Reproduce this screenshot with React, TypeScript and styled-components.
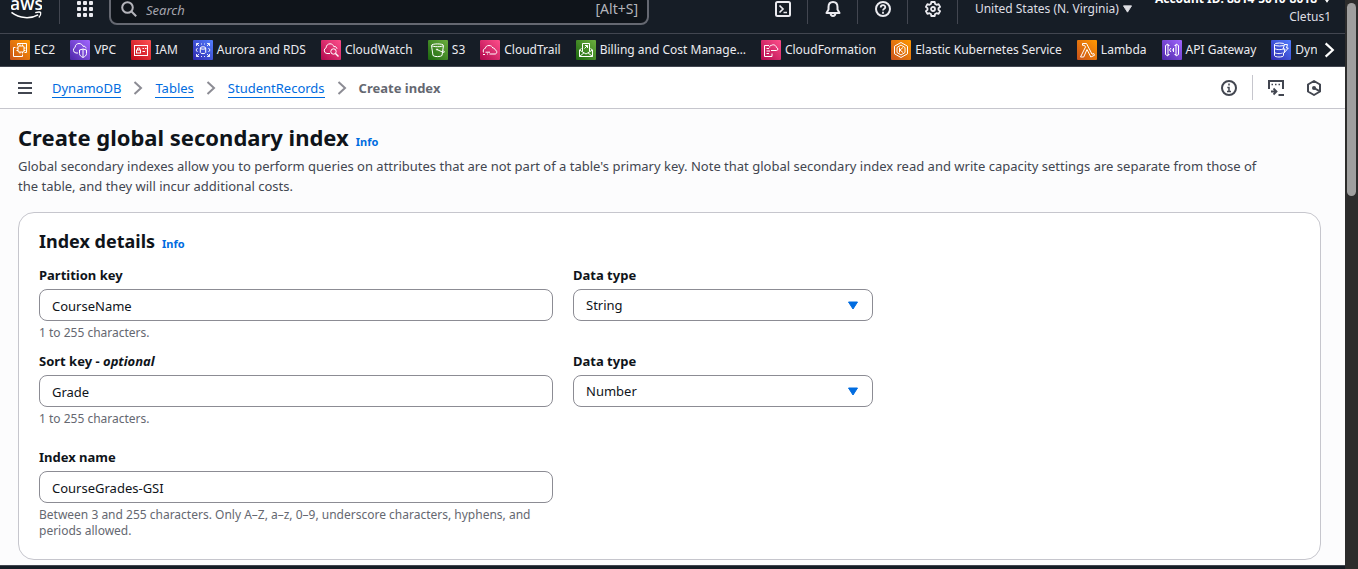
import React from "react";
import styled, { createGlobalStyle, css } from "styled-components";

const GlobalStyle = createGlobalStyle`
  * { box-sizing: border-box; }
  body {
    margin: 0;
    background: #fcfcfd;
    color: #0f141a;
    font-family: "Noto Sans", "Open Sans", sans-serif;
    font-size: 13px;
    line-height: 20px;
  }
  button, input, select { font: inherit; color: inherit; margin: 0; }
  button { padding: 0; border: 0; background: none; }
`;

/* ---------- window frame ---------- */

const Screen = styled.div`
  display: flex;
  height: 100vh;
  overflow: hidden;
`;

const Page = styled.div`
  flex: 1;
  min-width: 0;
  display: flex;
  flex-direction: column;
`;

const ScrollTrack = styled.div`
  flex: none;
  width: 13px;
  padding: 3px 2px;
  background: #2c2c2c;
`;

const ScrollThumb = styled.div`
  height: 34vh;
  border-radius: 5px;
  background: #9f9f9f;
`;

/* ---------- global navigation ---------- */

const TopBar = styled.header`
  display: flex;
  align-items: flex-end;
  height: 34px;
  overflow: hidden;
  background: #161d26;
  color: #dedee3;
  border-bottom: 1px solid #424650;
`;

const TopRow = styled.div`
  flex: 1;
  display: flex;
  align-items: center;
  height: 48px;
  padding: 0 14px 0 11px;
`;

const Logo = styled.a`
  display: flex;
  width: 31px;
  margin-right: 17px;
`;

const Cell = styled.button<{ $edge?: "left" | "right" }>`
  display: flex;
  align-items: center;
  justify-content: center;
  width: 50px;
  height: 30px;
  color: #ebebf0;
  ${(p) => p.$edge && css`border-${p.$edge}: 1px solid #424650;`}
  ${(p) => p.$edge === "right" && css`padding-left: 2px;`}
`;

const SearchBox = styled.label`
  display: flex;
  align-items: center;
  gap: 7px;
  flex: 0 1 540px;
  height: 32px;
  padding: 0 9px 0 10px;
  border: 2px solid #656871;
  border-radius: 8px;
  background: #0f141a;
  color: #b4b4bb;
  font-size: 14px;
`;

const SearchInput = styled.input`
  flex: 1;
  min-width: 0;
  padding: 2px 2px 0;
  border: 0;
  outline: 0;
  background: transparent;
  font-size: 13px;
  &::placeholder { color: #a4a4ad; font-style: italic; opacity: 1; }
`;

const Tools = styled.div`
  display: flex;
  align-items: center;
  margin-left: auto;
`;

const RegionButton = styled.button`
  display: flex;
  align-items: center;
  gap: 4px;
  margin: 0 23px 0 17px;
  font-size: 12px;
  white-space: nowrap;
`;

const AccountButton = styled.button`
  display: flex;
  flex-direction: column;
  align-items: flex-end;
  padding-bottom: 2px;
  font-size: 12px;
  line-height: 18px;
  white-space: nowrap;
`;

const AccountLine = styled.span`
  display: flex;
  align-items: center;
  gap: 6px;
  font-weight: 700;
  color: #fff;
`;

const Favorites = styled.nav`
  display: flex;
  align-items: center;
  height: 33px;
  padding-left: 10px;
  background: #161d26;
  border-bottom: 1px solid #424650;
`;

const FavoriteList = styled.div`
  flex: 1;
  min-width: 0;
  display: flex;
  gap: 15px;
  overflow: hidden;
`;

const Favorite = styled.a`
  flex: none;
  display: flex;
  align-items: center;
  gap: 4px;
  color: #ebebf0;
  font-size: 12px;
  text-decoration: none;
  white-space: nowrap;
`;

const ServiceTile = styled.span<{ $from: string; $to: string }>`
  display: flex;
  width: 20px;
  height: 20px;
  border-radius: 1px;
  background: linear-gradient(45deg, ${(p) => p.$from}, ${(p) => p.$to});
`;

const ScrollRight = styled.button`
  display: flex;
  justify-content: center;
  width: 28px;
  padding-right: 4px;
  color: #fff;
`;

/* ---------- breadcrumb bar ---------- */

const CrumbBar = styled.div`
  display: flex;
  align-items: center;
  height: 42px;
  padding: 0 23px 0 17px;
  background: #fff;
  border-bottom: 1px solid #c6c6cd;
  color: #424650;
`;

const IconButton = styled.button`
  display: flex;
  color: #424650;
`;

const Crumbs = styled.nav`
  display: flex;
  align-items: center;
  gap: 12px;
  margin-left: 19px;
  color: #8c8c94;
`;

const CrumbLink = styled.a`
  height: 20px;
  color: #006ce0;
  border-bottom: 1px solid #006ce0;
  text-decoration: none;
`;

const CurrentCrumb = styled.span`
  color: #656871;
  font-weight: 700;
`;

const PageTools = styled.div`
  display: flex;
  align-items: center;
  gap: 22px;
  margin-left: auto;
`;

const Separator = styled.span`
  width: 1px;
  height: 25px;
  margin: 0 -7px;
  background: #c6c6cd;
`;

/* ---------- content ---------- */

const Main = styled.main`
  flex: 1;
  min-height: 0;
  overflow: hidden;
  padding: 13px 24px 0 18px;
`;

const Heading = styled.div`
  display: flex;
  align-items: baseline;
  gap: 7px;
`;

const Title = styled.h1`
  margin: 0;
  font-size: 22px;
  line-height: 30px;
`;

const Subtitle = styled.h2`
  margin: 0;
  font-size: 18px;
  line-height: 24px;
`;

const InfoLink = styled.a`
  color: #006ce0;
  font-size: 11px;
  font-weight: 700;
  text-decoration: none;
`;

const Description = styled.p`
  margin: 4px 0 16px;
  color: #424650;
`;

const Card = styled.section`
  padding: 16px 20px 20px;
  border: 1px solid #c6c6cd;
  border-radius: 16px;
  background: #fff;
`;

const Fields = styled.form`
  display: grid;
  grid-template-columns: minmax(0, 514px) minmax(0, 300px);
  gap: 10px 20px;
  margin-top: 11px;
`;

const Field = styled.div<{ $apart?: boolean }>`
  display: flex;
  flex-direction: column;
  gap: 4px;
  padding-top: ${(p) => (p.$apart ? 10 : 0)}px;
`;

const Label = styled.label`
  font-weight: 700;
`;

const controlStyle = css`
  width: 100%;
  height: 32px;
  padding: 0 12px;
  border: 1px solid #8c8c94;
  border-radius: 8px;
  background: #fff;
  outline: 0;
`;

const TextInput = styled.input`
  ${controlStyle}
  padding-top: 2px;
`;

const SelectWrap = styled.div`
  display: grid;
  align-items: center;
  > * { grid-area: 1 / 1; }
  > svg { justify-self: end; margin-right: 15px; pointer-events: none; }
`;

const Select = styled.select`
  ${controlStyle}
  appearance: none;
`;

const Hint = styled.span`
  color: #656871;
  font-size: 12px;
  line-height: 16px;
`;

const Footer = styled.footer`
  flex: none;
  height: 4px;
  background: #161d26;
  border-top: 1px solid #424650;
`;

/* ---------- drawings ---------- */

const Caret = ({ color = "currentColor", size = 9 }: { color?: string; size?: number }) => (
  <svg width={size} height={size - 1} viewBox="0 0 10 8" aria-hidden="true">
    <path d="M.5.5h9L5 7.5z" fill={color} stroke={color} strokeLinejoin="round" />
  </svg>
);

const Chevron = ({ w, h, sw }: { w: number; h: number; sw: number }) => (
  <svg width={w} height={h} viewBox="0 0 10 14" fill="none" stroke="currentColor" strokeWidth={sw} aria-hidden="true">
    <path d="M1.5 1 8 7l-6.500 6" />
  </svg>
);

const AwsLogo = () => (
  <svg width="32" height="24" viewBox="0 0 32 24" aria-hidden="true">
    <text x="16" y="13" textAnchor="middle" fontSize="18" fontWeight="600" fontFamily="Open Sans, sans-serif" fill="#fff">aws</text>
    <path d="M0.500 15.500C9 22 20 22.500 28 18" fill="none" stroke="#fff" strokeWidth="1.600" />
    <path d="M25 15.800c3-.9 5.500-.6 5.700 0 .2 1-.6 3.500-2 5" fill="none" stroke="#fff" strokeWidth="1.300" />
  </svg>
);

const Glyph = ({ children, size = 16, sw = 2 }: { children: React.ReactNode; size?: number; sw?: number }) => (
  <svg width={size} height={size} viewBox="0 0 16 16" fill="none" stroke="currentColor" strokeWidth={sw} aria-hidden="true">
    {children}
  </svg>
);

const AppGrid = () => (
  <svg width="16" height="16" viewBox="0 0 16 16" fill="currentColor" aria-hidden="true">
    {[0, 6, 12].flatMap((y) => [0, 6, 12].map((x) => <rect key={`${x}-${y}`} x={x} y={y} width="4" height="4" rx="1" />))}
  </svg>
);

const serviceArt: Record<string, React.ReactNode> = {
  ec2: (
    <>
      <rect x="8" y="6" width="6" height="6" rx="1" />
      <path d="M10 6V4.500M12.500 6V4.500M10 13.500V12M12.500 13.500V12M8 8H6.500M8 10.500H6.500M15.500 8H14M15.500 10.500H14" />
      <path d="M7.500 5.500V3.500h9v9h-2M5.500 7.500h-2v9h9v-2" />
    </>
  ),
  vpc: (
    <>
      <path d="M8 13H6a3 3 0 0 1-.8-5.700C5 5 7 3.500 9 3.500s3.500 1.200 4 2.800c1.800-.4 2.800.5 3 2" />
      <path d="m13 9 3.500 1v3.500c0 2-1.500 3-3.500 4-2-1-3.500-2-3.500-4V10zM13 9v8" />
    </>
  ),
  iam: (
    <>
      <rect x="3.500" y="5.500" width="13" height="10" />
      <rect x="5.500" y="10" width="4" height="3" />
      <path d="M6.500 10V8h2.200v2M11.500 8.500H13M14 8.500h1.500M11.500 11.500H14" />
    </>
  ),
  rds: (
    <>
      <ellipse cx="10" cy="8" rx="2.700" ry="1.200" />
      <path d="M7.300 8v4.500c0 1.500 5.400 1.500 5.400 0V8" />
      <path d="M3.500 6V3.500H6M3.500 3.500l2.500 2.500M14 3.500h2.500V6M16.500 3.500 14 6M3.500 14v2.500H6M3.500 16.500 6 14M14 16.500h2.500V14M16.500 16.500 14 14" strokeWidth=".9" />
      <path d="M4.500 8 3 10l1.500 2M15.500 8l1.500 2-1.500 2M8 4h1M11 4h1M8 16.500h1M11 16.500h1" strokeWidth=".9" />
    </>
  ),
  cloudwatch: (
    <>
      <path d="M9 13.500H6a3 3 0 0 1-.8-5.800C5 5.500 7 3.800 9 3.800s3.300 1.200 3.800 2.800c1.800-.3 3 .6 3.200 2.200" />
      <circle cx="12.500" cy="11.500" r="2.700" />
      <path d="m14.500 13.500 3 3" strokeWidth="1.400" />
    </>
  ),
  s3: (
    <>
      <ellipse cx="9.500" cy="5.300" rx="6" ry="1.400" />
      <path d="M3.500 5.500 5 15.500c1.500 1.500 7.500 1.500 9 0l1.500-10M9 9.500l6 2.800c2 .5 1.500-1-.3-2" />
      <circle cx="9" cy="9.500" r=".6" />
    </>
  ),
  cloudtrail: (
    <>
      <path d="M3.500 12.500c-.8-2 .2-4 2-4.300C5.500 6.500 7 5.500 9 5.500s3.200 1 3.800 2.500c1.800 0 2 .8 2.200 1.800 2.500.6 2.200 4.200 0 4.200H9.500M3 14.500h2M7 14h1" />
      <path d="M5.500 12.200h4.500" />
    </>
  ),
  billing: (
    <>
      <path d="M5.500 8.500 3.500 10v6.500h13V10l-2-1.500M3.500 10l6.500 4 6.500-4M3.500 16.500l4.500-3.700M16.500 16.500 12 12.800M6.500 11.500v-8h7v8" />
      <path d="M8.500 8.500 11.500 5.500M9 5.500h2.500V8" />
    </>
  ),
  cfn: (
    <>
      <path d="M8 5.500H3.500v11H11v-3M5.500 8.500H8M5.500 11H9M5.500 13.500H8" />
      <path d="M10 10.500h5.500c1.800 0 1.800-2.700 0-3-.5-2.200-3-3.500-4.800-2.200C9 5 8.500 6.500 8.700 7.500" />
    </>
  ),
  eks: (
    <>
      <path d="m10 2.500 6.500 3.700v7.600L10 17.500l-6.500-3.700V6.200z" />
      <path d="m10 5 4 2.500v5L10 15l-4-2.500v-5zM8.500 7.500v5M12 7.500 9 10l3 2.500" />
    </>
  ),
  lambda: <path d="M5.500 3.500h4L15 14.200l1.800-.7.700 1.800-3.700 1.700L10 9.500 6.700 17H3.500L8.500 7 7.500 5.300h-2z" />,
  apigw: (
    <>
      <path d="M3.500 5.500 6 4v12l-2.500-1.500zM16.500 5.500 14 4v12l2.500-1.500z" />
      <path d="M6 5.500h1.500M6 14.500h1.500M12.500 5.500H14M12.500 14.500H14M9 8l-1.500 2L9 12M11.500 8v4M10 10h1" />
    </>
  ),
  dynamo: (
    <>
      <ellipse cx="8.500" cy="4.500" rx="5" ry="1.500" />
      <path d="M3.500 4.500v11c0 2 9 2 9 0V13M3.500 8c0 1.800 7 2 9 1M3.500 12c0 1.800 6 2 8 1" />
      <path d="M13.500 4.500h3L15.500 8h1.800L13 13l1-4h-2z" />
    </>
  ),
};

const orange = ["#c8511b", "#ff9900"];
const purple = ["#4d27a8", "#a166ff"];
const red = ["#bd0816", "#ff5252"];
const blue = ["#2e27ad", "#527fff"];
const pink = ["#b0084d", "#ff4f8b"];
const green = ["#1b660f", "#6cae3e"];

const services: { name: string; art: string; colors: string[] }[] = [
  { name: "EC2", art: "ec2", colors: orange },
  { name: "VPC", art: "vpc", colors: purple },
  { name: "IAM", art: "iam", colors: red },
  { name: "Aurora and RDS", art: "rds", colors: blue },
  { name: "CloudWatch", art: "cloudwatch", colors: pink },
  { name: "S3", art: "s3", colors: green },
  { name: "CloudTrail", art: "cloudtrail", colors: pink },
  { name: "Billing and Cost Manage…", art: "billing", colors: green },
  { name: "CloudFormation", art: "cfn", colors: pink },
  { name: "Elastic Kubernetes Service", art: "eks", colors: orange },
  { name: "Lambda", art: "lambda", colors: orange },
  { name: "API Gateway", art: "apigw", colors: purple },
  { name: "DynamoDB", art: "dynamo", colors: blue },
];

/* ---------- form parts ---------- */

type TextFieldProps = { id: string; label: React.ReactNode; value: string; hint: string; apart?: boolean };

const TextField = ({ id, label, value, hint, apart }: TextFieldProps) => (
  <Field $apart={apart}>
    <Label htmlFor={id}>{label}</Label>
    <TextInput id={id} type="text" defaultValue={value} />
    <Hint>{hint}</Hint>
  </Field>
);

const TypeField = ({ id, value }: { id: string; value: string }) => (
  <Field>
    <Label htmlFor={id}>Data type</Label>
    <SelectWrap>
      <Select id={id} defaultValue={value}>
        <option>String</option>
        <option>Number</option>
        <option>Binary</option>
      </Select>
      <Caret color="#006ce0" size={10} />
    </SelectWrap>
  </Field>
);

export default function App() {
  return (
    <Screen>
      <GlobalStyle />
      <Page>
        <TopBar>
          <TopRow>
            <Logo href="#" aria-label="AWS home"><AwsLogo /></Logo>
            <Cell $edge="left" aria-label="Services"><AppGrid /></Cell>
            <SearchBox>
              <Glyph sw={2}>
                <circle cx="6.500" cy="6.500" r="5.300" />
                <path d="m10.500 10.500 4.700 4.700" />
              </Glyph>
              <SearchInput type="search" placeholder="Search" aria-label="Search" />
              [Alt+S]
            </SearchBox>
            <Tools>
              <Cell $edge="right" aria-label="CloudShell">
                <Glyph>
                  <rect x="1" y="1" width="14" height="14" rx="1.500" />
                  <path d="m4.500 4.500 3.500 3.500-3.500 3.500M8.500 11.500H12" strokeWidth="1.700" />
                </Glyph>
              </Cell>
              <Cell $edge="right" aria-label="Notifications">
                <Glyph>
                  <path d="M8 1C5 1 3.500 3.300 3.500 6v2.500L1.500 12h13l-2-3.500V6C12.500 3.300 11 1 8 1z" strokeLinejoin="round" />
                  <path d="M5.500 12c.3 4 4.700 4 5 0" />
                </Glyph>
              </Cell>
              <Cell $edge="right" aria-label="Support">
                <Glyph>
                  <circle cx="8" cy="8" r="7" />
                  <path d="M5.700 6.500C5.700 3.300 10.300 3.400 10.300 6.200 10.300 7.800 8 7.700 8 9.500M8 10.700v2" strokeWidth="1.800" />
                </Glyph>
              </Cell>
              <Cell $edge="right" aria-label="Settings">
                <Glyph>
                  <path d="M6.300 1h3.400l.4 2 1.500.8 2-.7 1.500 2.800L13.500 7.200v1.600l1.600 1.300-1.500 2.800-2-.7-1.500.8-.4 2H6.300l-.4-2-1.500-.8-2 .7L.9 10.100l1.600-1.300V7.200L.9 5.900l1.500-2.800 2 .7L5.900 3z" strokeWidth="1.800" strokeLinejoin="round" />
                  <circle cx="8" cy="8" r="2" strokeWidth="1.800" />
                </Glyph>
              </Cell>
              <RegionButton>United States (N. Virginia) <Caret /></RegionButton>
              <AccountButton>
                <AccountLine>Account ID: 8814-5010-8018 <Caret size={8} /></AccountLine>
                <span>Cletus1</span>
              </AccountButton>
            </Tools>
          </TopRow>
        </TopBar>

        <Favorites aria-label="Favorites">
          <FavoriteList>
            {services.map((s) => (
              <Favorite key={s.name} href="#">
                <ServiceTile $from={s.colors[0]} $to={s.colors[1]}>
                  <svg width="20" height="20" viewBox="0 0 20 20" fill="none" stroke="#fff" strokeWidth="1" aria-hidden="true">
                    {serviceArt[s.art]}
                  </svg>
                </ServiceTile>
                {s.name}
              </Favorite>
            ))}
          </FavoriteList>
          <ScrollRight aria-label="More services"><Chevron w={11} h={16} sw={2} /></ScrollRight>
        </Favorites>

        <CrumbBar>
          <IconButton aria-label="Open menu">
            <Glyph><path d="M1 3h14M1 8h14M1 13h14" /></Glyph>
          </IconButton>
          <Crumbs aria-label="Breadcrumb">
            <CrumbLink href="#">DynamoDB</CrumbLink>
            <Chevron w={10} h={14} sw={2} />
            <CrumbLink href="#">Tables</CrumbLink>
            <Chevron w={10} h={14} sw={2} />
            <CrumbLink href="#">StudentRecords</CrumbLink>
            <Chevron w={10} h={14} sw={2} />
            <CurrentCrumb>Create index</CurrentCrumb>
          </Crumbs>
          <PageTools>
            <IconButton aria-label="Info panel">
              <Glyph>
                <circle cx="8" cy="8" r="7" />
                <path d="M8 3.500v2M6.300 7.500H8v4M6 11.500h4" strokeWidth="1.500" />
              </Glyph>
            </IconButton>
            <Separator />
            <IconButton aria-label="Console to code">
              <Glyph>
                <path d="M1 9V1h14v8" />
                <path d="M3.500 4.500h1.500M7 4.500h1.500M10.500 4.500h1.500" strokeWidth="1.500" />
                <path d="M3 11.500h5M5.500 8.500l3 3-3 3M10.500 15H16" strokeWidth="1.800" />
              </Glyph>
            </IconButton>
            <IconButton aria-label="Tools">
              <Glyph>
                <path d="m8 1 6 3.500v7L8 15l-6-3.500v-7z" strokeLinejoin="round" />
                <circle cx="8" cy="8" r="2" fill="currentColor" stroke="none" />
                <path d="m8 8 5.500 3.200" />
              </Glyph>
            </IconButton>
          </PageTools>
        </CrumbBar>

        <Main>
          <Heading>
            <Title>Create global secondary index</Title>
            <InfoLink href="#">Info</InfoLink>
          </Heading>
          <Description>
            Global secondary indexes allow you to perform queries on attributes that are not part of a table's primary
            key. Note that global secondary index read and write capacity settings are separate from those of
            <br />
            the table, and they will incur additional costs.
          </Description>
          <Card>
            <Heading>
              <Subtitle>Index details</Subtitle>
              <InfoLink href="#">Info</InfoLink>
            </Heading>
            <Fields>
              <TextField id="partition-key" label="Partition key" value="CourseName" hint="1 to 255 characters." />
              <TypeField id="partition-type" value="String" />
              <TextField
                id="sort-key"
                label={<>Sort key - <em>optional</em></>}
                value="Grade"
                hint="1 to 255 characters."
              />
              <TypeField id="sort-type" value="Number" />
              <TextField
                id="index-name"
                label="Index name"
                value="CourseGrades-GSI"
                hint="Between 3 and 255 characters. Only A–Z, a–z, 0–9, underscore characters, hyphens, and periods allowed."
                apart
              />
            </Fields>
          </Card>
        </Main>
        <Footer />
      </Page>
      <ScrollTrack aria-hidden="true"><ScrollThumb /></ScrollTrack>
    </Screen>
  );
}
